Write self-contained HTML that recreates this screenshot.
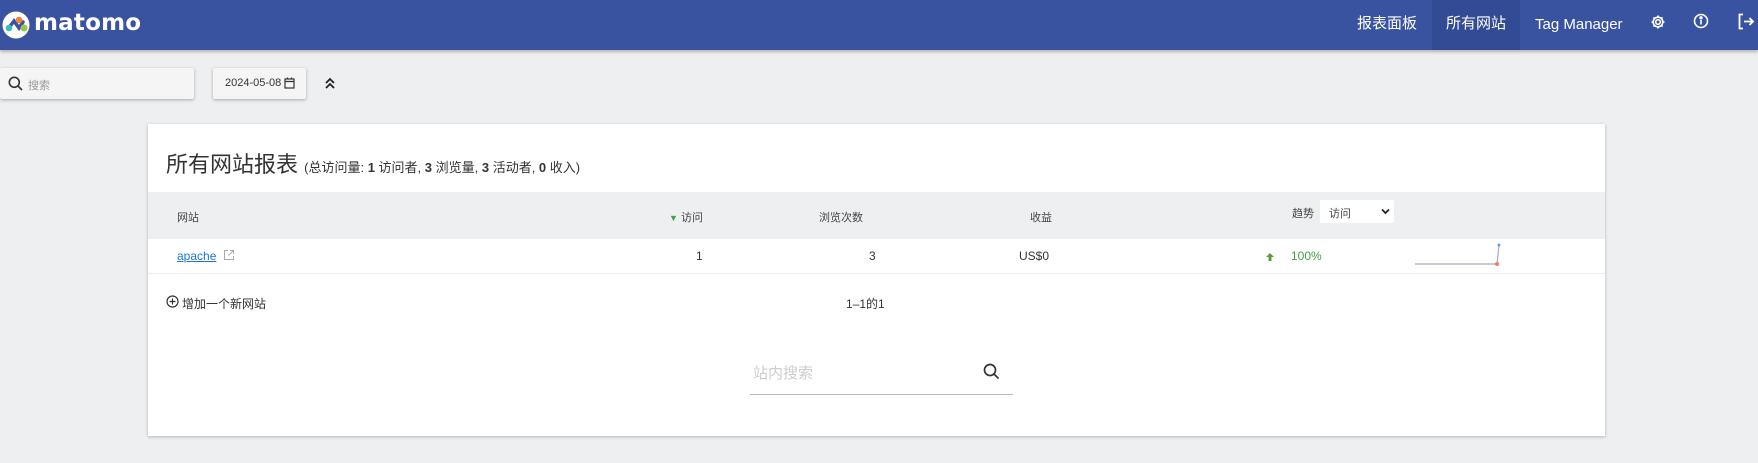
<!DOCTYPE html>
<html><head><meta charset="utf-8"><style>
*{box-sizing:border-box;margin:0;padding:0}
body{width:1758px;height:463px;background:#eeeff1;font-family:"Liberation Sans","Noto Sans CJK SC",sans-serif;color:#333;position:relative;overflow:hidden}
.a{position:absolute;white-space:nowrap}
.hdr{position:absolute;left:0;top:0;width:1758px;height:50px;background:#3a53a1;box-shadow:0 2px 3px rgba(0,0,0,.25)}
.nav{color:#fff;font-size:15px;top:12px;line-height:24px;height:24px}
.box{background:#f5f5f6;box-shadow:0 1px 3px rgba(0,0,0,.3);border-radius:2px}
.card{position:absolute;left:148px;top:124px;width:1457px;height:312px;background:#fff;box-shadow:0 1px 3px rgba(0,0,0,.25)}
.th{font-size:11px;color:#444}
.td{font-size:12px;color:#333}
</style></head><body>
<div class="hdr"></div>
<svg class="a" style="left:2px;top:11px" width="28" height="28" viewBox="0 0 28 28"><circle cx="14" cy="14" r="13.5" fill="#fff"/><path d="M6 18 L12 10 L17 17 L21 11" stroke="#3a53a1" stroke-width="3.5" fill="none" stroke-linecap="round"/><circle cx="7" cy="17" r="3.3" fill="#35bfc0"/><circle cx="17" cy="9" r="3.3" fill="#f38334"/><circle cx="22" cy="17" r="3.5" fill="#95c748"/></svg>
<div class="a" style="left:34px;top:10px;color:#fff;font-size:23px;font-weight:bold;letter-spacing:0.2px;font-family:'DejaVu Sans','Liberation Sans',sans-serif">matomo</div>
<div class="a" style="left:1432px;top:0;width:88px;height:50px;background:#324b94"></div>
<div class="a nav" style="left:1357px">报表面板</div>
<div class="a nav" style="left:1446px">所有网站</div>
<div class="a nav" style="left:1535px;top:13px">Tag Manager</div>
<svg class="a" style="left:1650px;top:14px" width="16" height="16" viewBox="0 0 16 16" fill="none" stroke="#fff" stroke-width="1.6"><circle cx="8" cy="8" r="2.3"/><path d="M8 1.5v2M8 12.5v2M1.5 8h2M12.5 8h2M3.4 3.4l1.4 1.4M11.2 11.2l1.4 1.4M3.4 12.6l1.4-1.4M11.2 4.8l1.4-1.4"/><circle cx="8" cy="8" r="4.8"/></svg>
<svg class="a" style="left:1693px;top:13px" width="16" height="16" viewBox="0 0 16 16" fill="none" stroke="#fff" stroke-width="1.6"><circle cx="8" cy="8" r="6.5"/><path d="M8 7v4.5"/><circle cx="8" cy="4.8" r=".9" fill="#fff"/></svg>
<svg class="a" style="left:1737px;top:13px" width="18" height="17" viewBox="0 0 18 17" fill="none" stroke="#fff" stroke-width="1.8"><path d="M6 1.5H2.5v14H6M7 8.5h9M12.5 5l3.5 3.5-3.5 3.5"/></svg>

<div class="a box" style="left:0;top:68px;width:194px;height:31px"></div>
<svg class="a" style="left:8px;top:76px" width="15" height="15" viewBox="0 0 15 15" fill="none" stroke="#333" stroke-width="1.6"><circle cx="6.3" cy="6.3" r="5"/><path d="M10 10l4 4"/></svg>
<div class="a" style="left:28px;top:77px;font-size:11px;color:#999">搜索</div>
<div class="a box" style="left:213px;top:68px;width:93px;height:31px"></div>
<div class="a" style="left:225px;top:77px;font-size:11px;color:#333">2024-05-08</div>
<svg class="a" style="left:284px;top:77px" width="11" height="12" viewBox="0 0 11 12" fill="none" stroke="#333" stroke-width="1.2"><rect x="1" y="2" width="9" height="9"/><path d="M1 4.5h9M3.5 0.5v2M7.5 0.5v2"/></svg>
<svg class="a" style="left:324px;top:76px" width="12" height="14" viewBox="0 0 12 14" fill="none" stroke="#222" stroke-width="1.8"><path d="M2 7l4-4 4 4M2 12l4-4 4 4"/></svg>

<div class="card"></div>
<div class="a" style="left:166px;top:147px;font-size:22px;color:#333">所有网站报表 <span style="font-size:13px;color:#333">(总访问量: <b>1</b> 访问者, <b>3</b> 浏览量, <b>3</b> 活动者, <b>0</b> 收入)</span></div>
<div class="a" style="left:148px;top:192px;width:1457px;height:47px;background:#eeeff1"></div>
<div class="a th" style="left:177px;top:209px">网站</div>
<div class="a th" style="left:669px;top:209px"><span style="color:#43a047;font-size:9px">▼</span> 访问</div>
<div class="a th" style="left:819px;top:209px">浏览次数</div>
<div class="a th" style="left:1030px;top:209px">收益</div>
<div class="a th" style="left:1292px;top:205px">趋势</div>
<div class="a" style="left:1320px;top:200px;width:74px;height:23px;background:#fff;border-radius:2px"></div>
<div class="a th" style="left:1329px;top:205px;font-size:11px">访问</div>
<svg class="a" style="left:1381px;top:208px" width="9" height="7" viewBox="0 0 9 7" fill="none" stroke="#222" stroke-width="1.8"><path d="M1 1.5l3.5 3.5 3.5-3.5"/></svg>
<div class="a" style="left:148px;top:273px;width:1457px;height:1px;background:#eee"></div>
<div class="a td" style="left:177px;top:249px;color:#1e73d6;text-decoration:underline">apache</div>
<svg class="a" style="left:223px;top:249px" width="12" height="12" viewBox="0 0 12 12" fill="none" stroke="#aaa" stroke-width="1"><path d="M5 1.5H1.5v9h9V7M7 1.5h3.5V5M10.5 1.5L5.5 6.5"/></svg>
<div class="a td" style="left:696px;top:249px">1</div>
<div class="a td" style="left:869px;top:249px">3</div>
<div class="a td" style="left:1019px;top:249px">US$0</div>
<svg class="a" style="left:1265px;top:252px" width="10" height="10" viewBox="0 0 10 10"><path d="M5 1L9 5H6.5V9h-3V5H1z" fill="#5a9e3a"/></svg>
<div class="a td" style="left:1291px;top:249px;color:#43a047">100%</div>
<svg class="a" style="left:1413px;top:242px" width="90" height="26" viewBox="0 0 90 26"><path d="M2 22H84L86 3" stroke="#aab" stroke-width="1.2" fill="none"/><circle cx="84" cy="22" r="2" fill="#f47a7a"/><circle cx="86" cy="3" r="1.5" fill="#5aa3f0"/></svg>
<svg class="a" style="left:166px;top:295px" width="13" height="13" viewBox="0 0 13 13" fill="none" stroke="#333" stroke-width="1.2"><circle cx="6.5" cy="6.5" r="5.5"/><path d="M6.5 3.5v6M3.5 6.5h6"/></svg>
<div class="a td" style="left:182px;top:295px">增加一个新网站</div>
<div class="a td" style="left:846px;top:295px">1–1的1</div>
<div class="a" style="left:753px;top:362px;font-size:15px;color:#ccc">站内搜索</div>
<svg class="a" style="left:983px;top:363px" width="17" height="17" viewBox="0 0 17 17" fill="none" stroke="#333" stroke-width="1.7"><circle cx="7" cy="7" r="5.5"/><path d="M11 11l4.5 4.5"/></svg>
<div class="a" style="left:750px;top:394px;width:263px;height:1px;background:#bbb"></div>
</body></html>
